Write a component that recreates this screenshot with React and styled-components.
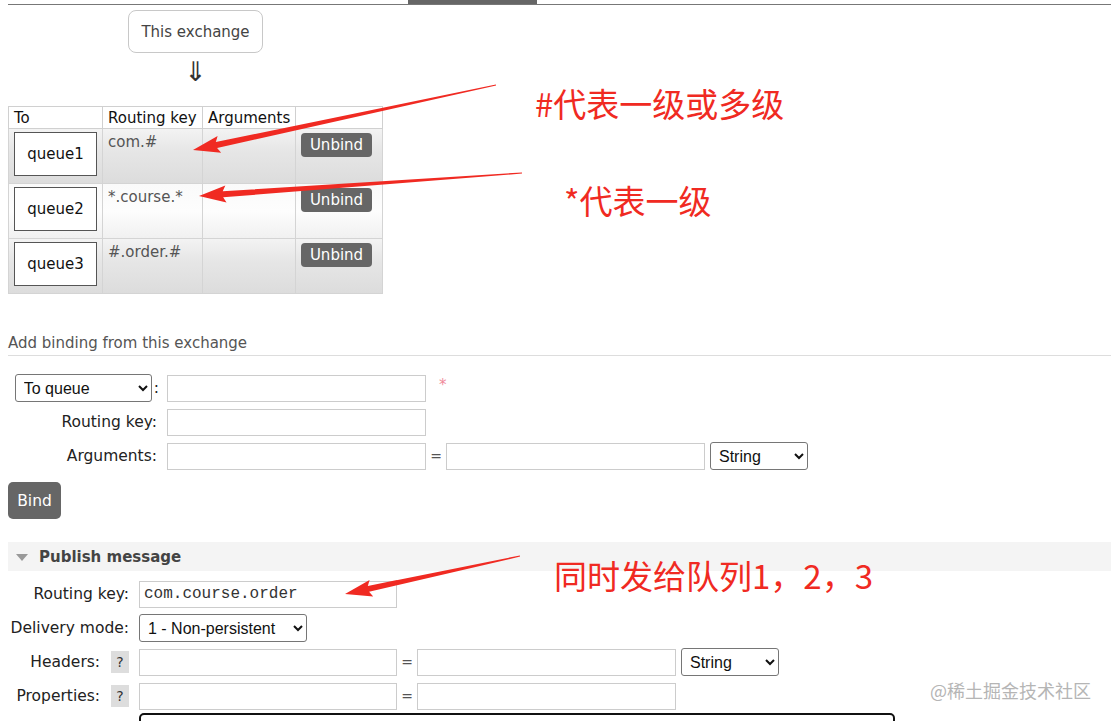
import React from 'react';
import styled, { createGlobalStyle } from 'styled-components';

const GlobalStyle = createGlobalStyle`
  html, body {
    margin: 0;
    padding: 0;
    background: #fff;
  }
  body {
    font-family: "DejaVu Sans", Verdana, sans-serif;
    color: #222;
    overflow: hidden;
  }
`;

const bindings = [
  { queue: 'queue1', key: 'com.#', shade: 'dark' },
  { queue: 'queue2', key: '*.course.*', shade: 'light' },
  { queue: 'queue3', key: '#.order.#', shade: 'dark' },
];

const notes = [
  { text: '#代表一级或多级', x: 535, y: 81 },
  { text: '*代表一级', x: 564, y: 178 },
  { text: '同时发给队列1，2，3', x: 554, y: 553 },
];

const arrows = [
  { from: [496, 85], to: [193, 150] },
  { from: [522, 173], to: [199, 196] },
  { from: [520, 556], to: [345, 594] },
];

function arrowPoints([tx, ty], [hx, hy]) {
  const len = Math.hypot(hx - tx, hy - ty);
  const dx = (hx - tx) / len;
  const dy = (hy - ty) / len;
  const nx = -dy;
  const ny = dx;
  const bx = hx - dx * 24;
  const by = hy - dy * 24;
  const pt = (x, y, w) => `${x + nx * w},${y + ny * w}`;
  return [
    pt(tx, ty, 0.6),
    pt(bx, by, 3),
    pt(bx - dx * 3, by - dy * 3, 8.5),
    `${hx},${hy}`,
    pt(bx - dx * 3, by - dy * 3, -8.5),
    pt(bx, by, -3),
    pt(tx, ty, -0.6),
  ].join(' ');
}

export default function App() {
  return (
    <Page>
      <GlobalStyle />
      <TopNav>
        <NavTab />
      </TopNav>

      <ExchangeBox>This exchange</ExchangeBox>
      <DownArrow>⇓</DownArrow>

      <BindingTable>
        <thead>
          <tr>
            <Th $w={94}>To</Th>
            <Th $w={100}>Routing key</Th>
            <Th $w={93}>Arguments</Th>
            <Th $w={87}></Th>
          </tr>
        </thead>
        <tbody>
          {bindings.map((b) => (
            <BindRow key={b.queue} $shade={b.shade}>
              <Td>
                <QueueBox>{b.queue}</QueueBox>
              </Td>
              <Td>
                <KeyText>{b.key}</KeyText>
              </Td>
              <Td></Td>
              <Td>
                <SmallButton>Unbind</SmallButton>
              </Td>
            </BindRow>
          ))}
        </tbody>
      </BindingTable>

      <SectionTitle>Add binding from this exchange</SectionTitle>

      <Form $top={18}>
        <Row>
          <Label $w={159}>
            <Select $w={137}>
              <option>To queue</option>
            </Select>
            <Colon>:</Colon>
          </Label>
          <Input $w={259} />
          <Required>*</Required>
        </Row>
        <Row>
          <Label $w={159}>Routing key:</Label>
          <Input $w={259} />
        </Row>
        <Row>
          <Label $w={159}>Arguments:</Label>
          <Input $w={259} />
          <Equals>=</Equals>
          <Input $w={259} />
          <Select $w={98} $ml={5}>
            <option>String</option>
          </Select>
        </Row>
      </Form>

      <BigButton>Bind</BigButton>

      <PublishHeader>
        <Triangle />
        Publish message
      </PublishHeader>

      <Form $top={9}>
        <Row>
          <Label $w={131}>Routing key:</Label>
          <Input $w={258} $mono defaultValue="com.course.order" />
        </Row>
        <Row>
          <Label $w={131}>Delivery mode:</Label>
          <Select $w={168}>
            <option>1 - Non-persistent</option>
          </Select>
        </Row>
        <Row>
          <Label $w={131}>
            Headers: <Help>?</Help>
          </Label>
          <Input $w={258} />
          <Equals>=</Equals>
          <Input $w={259} />
          <Select $w={98} $ml={5}>
            <option>String</option>
          </Select>
        </Row>
        <Row>
          <Label $w={131}>
            Properties: <Help>?</Help>
          </Label>
          <Input $w={258} />
          <Equals>=</Equals>
          <Input $w={259} />
        </Row>
        <Row>
          <Label $w={131}></Label>
          <Payload />
        </Row>
      </Form>

      <Overlay width="1111" height="721">
        {arrows.map((a, i) => (
          <polygon key={i} points={arrowPoints(a.from, a.to)} fill="#f02a22" />
        ))}
      </Overlay>
      {notes.map((n) => (
        <Note key={n.text} style={{ left: n.x, top: n.y }}>
          {n.text}
        </Note>
      ))}
      <Watermark>@稀土掘金技术社区</Watermark>
    </Page>
  );
}

const Page = styled.div`
  position: relative;
  width: 1111px;
  height: 721px;
  overflow: hidden;
  padding-left: 8px;
  box-sizing: border-box;
`;

const TopNav = styled.div`
  height: 4px;
  border-bottom: 1px solid #777;
`;

const NavTab = styled.div`
  margin-left: 400px;
  width: 129px;
  height: 4px;
  background: #666;
`;

const ExchangeBox = styled.div`
  margin: 5px 0 0 120px;
  width: 135px;
  height: 43px;
  box-sizing: border-box;
  border: 1px solid #c8c8c8;
  border-radius: 8px;
  display: flex;
  align-items: center;
  justify-content: center;
  font-size: 15px;
  color: #444;
`;

const DownArrow = styled.div`
  margin-left: 120px;
  width: 135px;
  text-align: center;
  font-size: 27px;
  line-height: 38px;
  height: 53px;
  color: #333;
`;

const BindingTable = styled.table`
  border-collapse: collapse;
  table-layout: fixed;
  width: 374px;
  font-size: 15px;
  border: 1px solid #d0d0d0;
`;

const Th = styled.th`
  width: ${(p) => p.$w}px;
  height: 22px;
  padding: 0 5px;
  text-align: left;
  font-weight: normal;
  color: #111;
  border: 1px solid #d0d0d0;
  box-sizing: border-box;
  background: #fff;
  white-space: nowrap;
  overflow: hidden;
`;

const BindRow = styled.tr`
  background: ${(p) =>
    p.$shade === 'dark'
      ? 'linear-gradient(#f3f3f3, #e6e6e6 40%, #dcdcdc)'
      : 'linear-gradient(#fafafa, #fdfdfd 50%, #f0f0f0)'};
`;

const Td = styled.td`
  height: 55px;
  padding: 3px 5px;
  vertical-align: top;
  border: 1px solid #d4d4d4;
  box-sizing: border-box;
`;

const QueueBox = styled.div`
  width: 83px;
  height: 44px;
  box-sizing: border-box;
  border: 1px solid #555;
  background: #fff;
  display: flex;
  align-items: center;
  justify-content: center;
  color: #111;
`;

const KeyText = styled.div`
  color: #555;
  line-height: 20px;
`;

const SmallButton = styled.button`
  margin-top: 1px;
  width: 71px;
  height: 24px;
  border: none;
  border-radius: 4px;
  background: #666;
  color: #fff;
  font-family: inherit;
  font-size: 15px;
  padding: 0;
`;

const SectionTitle = styled.div`
  margin-top: 40px;
  font-size: 15px;
  color: #555;
  padding-bottom: 3px;
  border-bottom: 1px solid #ddd;
  line-height: 18px;
`;

const Form = styled.div`
  margin-top: ${(p) => p.$top}px;
  display: flex;
  flex-direction: column;
  gap: 6px;
`;

const Row = styled.div`
  display: flex;
  align-items: center;
  height: 28px;
`;

const Label = styled.div`
  width: ${(p) => p.$w}px;
  box-sizing: border-box;
  flex-shrink: 0;
  display: flex;
  align-items: center;
  justify-content: flex-end;
  padding-right: 10px;
  font-size: 15.5px;
  color: #222;
  white-space: pre;
`;

const Colon = styled.span`
  margin-left: 2px;
  margin-right: -2px;
`;

const Select = styled.select`
  width: ${(p) => p.$w}px;
  height: 28px;
  margin-left: ${(p) => p.$ml || 0}px;
  font-family: "Liberation Sans", Arial, sans-serif;
  font-size: 16px;
  color: #111;
  border: 1px solid #767676;
  border-radius: 3px;
  background: #fff;
  padding: 0 4px;
`;

const Input = styled.input`
  width: ${(p) => p.$w}px;
  height: 27px;
  box-sizing: border-box;
  border: 1px solid #ccc;
  padding: 0 4px;
  font-family: ${(p) => (p.$mono ? '"Liberation Mono", "Courier New", monospace' : 'inherit')};
  font-size: ${(p) => (p.$mono ? '16px' : '14px')};
  color: #333;
  outline: none;
`;

const Required = styled.span`
  margin-left: 13px;
  color: #f08a9a;
  font-size: 15px;
  align-self: flex-start;
  margin-top: 2px;
`;

const Equals = styled.span`
  width: 20px;
  text-align: center;
  color: #555;
  font-size: 14px;
`;

const BigButton = styled.button`
  margin-top: 12px;
  width: 53px;
  height: 37px;
  border: none;
  border-radius: 5px;
  background: #666;
  color: #fff;
  font-family: inherit;
  font-size: 15.5px;
  padding: 0;
  display: block;
`;

const PublishHeader = styled.div`
  margin-top: 23px;
  height: 29px;
  background: #f4f4f4;
  display: flex;
  align-items: center;
  font-weight: bold;
  font-size: 15px;
  color: #444;
`;

const Triangle = styled.span`
  width: 0;
  height: 0;
  margin: 2px 11px 0 8px;
  border-left: 6px solid transparent;
  border-right: 6px solid transparent;
  border-top: 7px solid #999;
`;

const Help = styled.span`
  display: inline-flex;
  align-items: center;
  justify-content: center;
  margin-left: 6px;
  width: 18px;
  height: 22px;
  background: #ddd;
  color: #333;
  font-size: 14px;
`;

const Payload = styled.div`
  width: 756px;
  height: 60px;
  margin-top: 26px;
  box-sizing: border-box;
  border: 2px solid #111;
  border-radius: 5px;
  flex-shrink: 0;
`;

const Overlay = styled.svg`
  position: absolute;
  left: 0;
  top: 0;
  pointer-events: none;
`;

const Note = styled.div`
  position: absolute;
  font-family: "Noto Sans CJK SC", "Noto Sans", sans-serif;
  font-size: 33px;
  line-height: 44px;
  color: #f02a22;
  white-space: nowrap;
`;

const Watermark = styled.div`
  position: absolute;
  left: 930px;
  top: 677px;
  font-family: "Noto Sans CJK SC", sans-serif;
  font-size: 18px;
  color: #b5b5b5;
  white-space: nowrap;
`;
